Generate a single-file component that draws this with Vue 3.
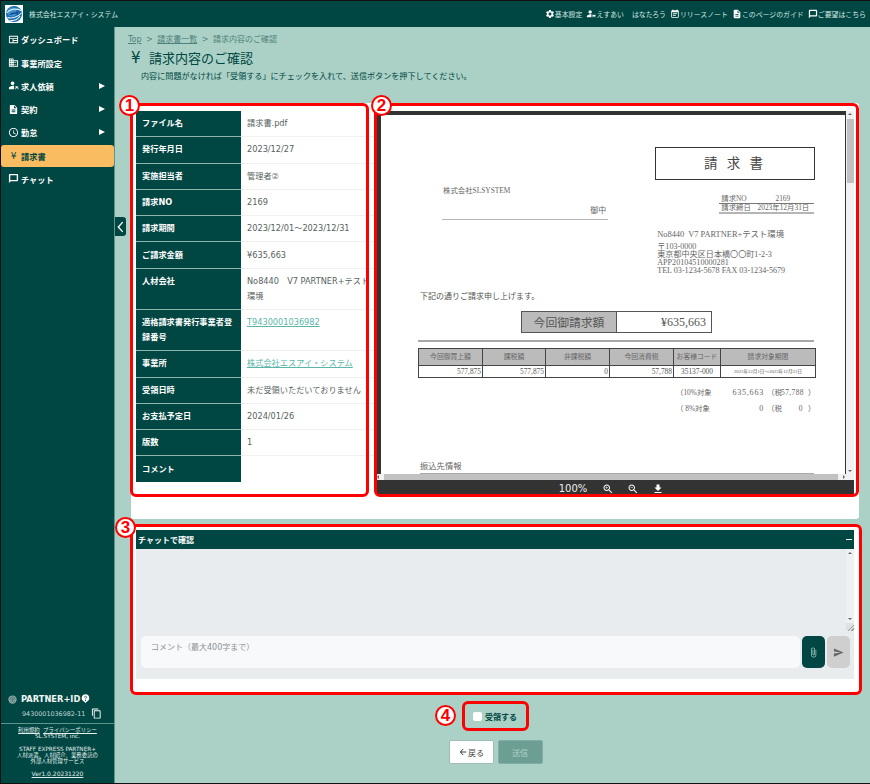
<template>
  <div class="app">
    <header class="topbar">
      <svg class="logo" viewBox="0 0 18 18">
        <rect width="18" height="18" fill="#fff" />
        <circle cx="9" cy="9" r="8" fill="#1c6bb0" />
        <circle cx="7" cy="7" r="4.500" fill="#3f94cf" />
        <path d="M1.500 8C5 4 11 3 16 5.500M2.500 12.500C7 14 13 12 16.500 8M5 15.500c4 .5 8-1.500 10-4.500" fill="none" stroke="#e6f4fb" stroke-width="1.100" />
        <path d="M5 9.500c2.500-1.500 5-2 8-1.500" fill="none" stroke="#0c3f7a" stroke-width="1.200" />
      </svg>
      <span class="company">株式会社エスアイ・システム</span>
      <nav class="top-links">
        <span v-for="link in topLinks" :key="link.label" class="top-link">
          <svg v-if="link.icon" viewBox="0 0 24 24"><path :d="icons[link.icon]" /></svg>
          {{ link.label }}
        </span>
      </nav>
    </header>

    <div class="body">
      <aside class="sidebar">
        <ul class="menu">
          <li v-for="item in menu" :key="item.label" :class="['menu-item', { active: item.active }]">
            <span v-if="item.yen" class="menu-yen">¥</span>
            <svg v-else class="menu-icon" viewBox="0 0 24 24"><path :d="icons[item.icon]" /></svg>
            <span class="menu-label">{{ item.label }}</span>
            <span v-if="item.sub" class="menu-arrow"></span>
          </li>
        </ul>

        <div class="side-foot">
          <div class="pid-title">
            <svg class="finger" viewBox="0 0 24 24">
              <circle cx="12" cy="12" r="11" fill="#8fa8a2" />
              <path d="M5 12a7 7 0 0 1 14 0M8 14a4 4 0 0 1 8 0M12 12v6M7 17c1 1.500 2 2.500 3 3M17 16c-.5 2-1 3-2 4" fill="none" stroke="#004643" stroke-width="1.300" />
            </svg>
            <span>PARTNER+ID</span>
            <svg class="help" viewBox="0 0 24 24">
              <path d="M12 1a10 10 0 0 0-4 19.200L12 24l4-3.800A10 10 0 0 0 12 1z" fill="#fff" />
              <path d="M9 9a3 3 0 1 1 4.500 2.600c-1 .6-1.500 1.200-1.500 2.400" fill="none" stroke="#004643" stroke-width="2.200" />
              <circle cx="12" cy="17" r="1.400" fill="#004643" />
            </svg>
          </div>
          <div class="pid-number">
            <span>9430001036982-11</span>
            <svg viewBox="0 0 24 24"><path :d="icons.copy" /></svg>
          </div>
          <div class="legal">
            <div><u>利用規約</u>&nbsp; <u>プライバシーポリシー</u></div>
            <div class="legal-latin">SL.SYSTEM, inc.</div>
            <div class="legal-block legal-latin">STAFF EXPRESS PARTNER+</div>
            <div>人材派遣、人材紹介、業務委託の</div>
            <div>外部人材管理サービス</div>
            <div class="legal-ver"><u>Ver1.0.20231220</u></div>
          </div>
        </div>
      </aside>

      <main class="main">
        <button class="side-toggle" type="button">
          <svg viewBox="0 0 10 18"><path d="M7.500 3.500 2.500 9l5 5.500" /></svg>
        </button>

        <div class="crumbs">
          <u>Top</u><span class="sep">&gt;</span><u>請求書一覧</u><span class="sep">&gt;</span><span>請求内容のご確認</span>
        </div>
        <h1 class="title"><span class="title-yen">¥</span>請求内容のご確認</h1>
        <p class="lead">内容に問題がなければ「受領する」にチェックを入れて、送信ボタンを押下してください。</p>

        <section class="card">
          <div class="info-box">
            <span class="mark"></span>
            <span class="badge badge-1">1</span>
            <table class="info">
              <tbody>
                <tr v-for="row in details" :key="row.label">
                  <th>{{ row.label }}</th>
                  <td>
                    <a v-if="row.link" class="link">{{ row.value }}</a>
                    <template v-else>{{ row.value }}</template>
                  </td>
                </tr>
              </tbody>
            </table>
          </div>

          <div class="viewer-box">
            <span class="mark"></span>
            <span class="badge badge-2">2</span>
            <div class="viewer">
              <div class="viewer-main">
                <div class="viewer-left">
                  <div class="doc">
                    <div class="doc-title">請 求 書</div>
                    <div class="doc-head">
                      <div class="doc-to">
                        <div>株式会社SLSYSTEM</div>
                        <div class="doc-onchu">御中</div>
                      </div>
                      <div class="doc-from">
                        <div class="doc-meta">
                          <div class="meta-row first"><span>請求NO</span><span class="meta-no">2169</span></div>
                          <div class="meta-row"><span>請求締日</span><span>2023年12月31日</span></div>
                        </div>
                        <div class="doc-name">No8440&nbsp; V7 PARTNER+テスト環境</div>
                        <div>〒103-0000</div>
                        <div>東京都中央区日本橋〇〇町1-2-3</div>
                        <div>APP20104510000281</div>
                        <div>TEL 03-1234-5678 FAX 03-1234-5679</div>
                      </div>
                    </div>
                    <div class="doc-note">下記の通りご請求申し上げます。</div>
                    <div class="doc-amount">
                      <span class="amount-label">今回御請求額</span>
                      <span class="amount-value">¥635,663</span>
                    </div>
                    <div class="doc-rule"></div>
                    <table class="doc-table">
                      <thead>
                        <tr>
                          <th v-for="col in billCols" :key="col.label" :style="{ width: col.width + 'px' }">{{ col.label }}</th>
                        </tr>
                      </thead>
                      <tbody>
                        <tr>
                          <td>577,875</td>
                          <td>577,875</td>
                          <td>0</td>
                          <td>57,788</td>
                          <td class="center">35137-000</td>
                          <td class="center tiny">2023年12月1日～2023年12月31日</td>
                        </tr>
                      </tbody>
                    </table>
                    <div class="tax-row first">
                      <span class="tax-a">（10%対象</span><span class="tax-b">635,663</span><span class="tax-c">（税</span><span class="tax-d">57,788</span><span class="tax-e">）</span>
                    </div>
                    <div class="tax-row">
                      <span class="tax-a">（ 8%対象</span><span class="tax-b">0</span><span class="tax-c">（税</span><span class="tax-d">0</span><span class="tax-e">）</span>
                    </div>
                    <div class="doc-bank">振込先情報</div>
                  </div>
                  <div class="hbar"><i class="arrow-l"></i><b></b><i class="arrow-r"></i></div>
                </div>
                <div class="vbar"><i class="arrow-u"></i><b></b><i class="arrow-d"></i></div>
              </div>
              <div class="viewer-tools">
                <span>100%</span>
                <svg viewBox="0 0 24 24"><path :d="icons.zoomIn" /></svg>
                <svg viewBox="0 0 24 24"><path :d="icons.zoomOut" /></svg>
                <svg viewBox="0 0 24 24"><path :d="icons.download" /></svg>
              </div>
            </div>
          </div>
        </section>

        <section class="chat">
          <span class="mark"></span>
          <span class="badge badge-3">3</span>
          <div class="chat-head"><span>チャットで確認</span><span class="chat-min"></span></div>
          <div class="chat-log">
            <div class="chat-scroll"><i class="arrow-u"></i><i class="arrow-d"></i><em></em></div>
          </div>
          <div class="chat-form">
            <div class="chat-input">コメント（最大400字まで）</div>
            <button class="chat-btn attach" type="button">
              <svg viewBox="0 0 24 24"><path :d="icons.attach" /></svg>
            </button>
            <button class="chat-btn send" type="button">
              <svg viewBox="0 0 24 24"><path :d="icons.send" /></svg>
            </button>
          </div>
        </section>

        <div class="receive">
          <span class="mark"></span>
          <span class="badge badge-4">4</span>
          <span class="check"></span>
          <span>受領する</span>
        </div>

        <div class="actions">
          <button class="btn back" type="button">
            <svg viewBox="0 0 24 24"><path :d="icons.back" /></svg>戻る
          </button>
          <button class="btn submit" type="button">送信</button>
        </div>
      </main>
    </div>
  </div>
</template>

<script setup>
const icons = {
  gear: 'M19.14 12.94c.04-.3.06-.61.06-.94 0-.32-.02-.64-.07-.94l2.03-1.58c.18-.14.23-.41.12-.61l-1.92-3.32c-.12-.22-.37-.29-.59-.22l-2.39.96c-.5-.38-1.03-.7-1.62-.94l-.36-2.54c-.04-.24-.24-.41-.48-.41h-3.84c-.24 0-.43.17-.47.41l-.36 2.54c-.59.24-1.13.57-1.62.94l-2.39-.96c-.22-.08-.47 0-.59.22L2.74 8.87c-.12.21-.08.47.12.61l2.03 1.58c-.05.3-.09.63-.09.94s.02.64.07.94l-2.03 1.58c-.18.14-.23.41-.12.61l1.92 3.32c.12.22.37.29.59.22l2.39-.96c.5.38 1.03.7 1.62.94l.36 2.54c.05.24.24.41.48.41h3.84c.24 0 .44-.17.47-.41l.36-2.54c.59-.24 1.13-.56 1.62-.94l2.39.96c.22.08.47 0 .59-.22l1.92-3.32c.12-.22.07-.47-.12-.61l-2.01-1.58zM12 15.6c-1.98 0-3.6-1.62-3.6-3.6s1.62-3.6 3.6-3.6 3.6 1.62 3.6 3.6-1.62 3.6-3.6 3.6z',
  doc: 'M14 2H6c-1.1 0-1.99.9-1.99 2L4 20c0 1.1.89 2 1.99 2H18c1.1 0 2-.9 2-2V8l-6-6zm2 16H8v-2h8v2zm0-4H8v-2h8v2zm-3-5V3.5L18.5 9H13z',
  comment: 'M20 2H4c-1.1 0-2 .9-2 2v18l4-4h14c1.1 0 2-.9 2-2V4c0-1.1-.9-2-2-2zm-1 13H5V5h14v10z',
  clock: 'M11.99 2C6.47 2 2 6.48 2 12s4.47 10 9.99 10C17.52 22 22 17.52 22 12S17.52 2 11.99 2zM12 20c-4.42 0-8-3.58-8-8s3.58-8 8-8 8 3.58 8 8-3.58 8-8 8zm.5-13H11v6l5.25 3.15.75-1.23-4.5-2.67z',
  send: 'M2.01 21L23 12 2.01 3 2 10l15 2-15 2z',
  attach: 'M16.5 6v11.5c0 2.21-1.79 4-4 4s-4-1.79-4-4V5c0-1.38 1.12-2.5 2.5-2.5s2.5 1.12 2.5 2.5v10.5c0 .55-.45 1-1 1s-1-.45-1-1V6H10v9.5c0 1.38 1.12 2.5 2.5 2.5s2.5-1.12 2.5-2.5V5c0-2.21-1.79-4-4-4S7 2.79 7 5v12.5c0 3.04 2.46 5.5 5.5 5.5s5.5-2.46 5.5-5.5V6h-1.5z',
  copy: 'M16 1H4c-1.1 0-2 .9-2 2v14h2V3h12V1zm3 4H8c-1.1 0-2 .9-2 2v14c0 1.1.9 2 2 2h11c1.1 0 2-.9 2-2V7c0-1.1-.9-2-2-2zm0 16H8V7h11v14z',
  zoomIn: 'M15.5 14h-.79l-.28-.27C15.41 12.59 16 11.11 16 9.5 16 5.91 13.09 3 9.5 3S3 5.91 3 9.5 5.91 16 9.5 16c1.61 0 3.09-.59 4.23-1.57l.27.28v.79l5 4.99L20.49 19l-4.99-5zm-6 0C7.01 14 5 11.99 5 9.5S7.01 5 9.5 5 14 7.01 14 9.5 11.99 14 9.5 14zm2.5-4h-2v2H9v-2H7V9h2V7h1v2h2v1z',
  zoomOut: 'M15.5 14h-.79l-.28-.27C15.41 12.59 16 11.11 16 9.5 16 5.91 13.09 3 9.5 3S3 5.91 3 9.5 5.91 16 9.5 16c1.61 0 3.09-.59 4.23-1.57l.27.28v.79l5 4.99L20.49 19l-4.99-5zm-6 0C7.01 14 5 11.99 5 9.5S7.01 5 9.5 5 14 7.01 14 9.5 11.99 14 9.5 14zM7 9h5v1H7z',
  download: 'M19 9h-4V3H9v6H5l7 7 7-7zM5 18v2h14v-2H5z',
  back: 'M20 11H7.83l5.59-5.59L12 4l-8 8 8 8 1.41-1.41L7.83 13H20v-2z',
  person: 'M10 11c2.21 0 4-1.79 4-4s-1.790-4-4-4-4 1.790-4 4 1.790 4 4 4zm0 2c-2.670 0-8 1.340-8 4v3h11v-7.700c-1-.200-2.100-.300-3-.300zm9 .500a2.500 2.500 0 1 0 0 5 2.500 2.500 0 0 0 0-5zM15 14h2v2h-2zm6 0h2v2h-2zm-6 4h2v2h-2zm6 0h2v2h-2z',
  building: 'M12 7V3H2v18h20V7H12zM6 19H4v-2h2v2zm0-4H4v-2h2v2zm0-4H4V9h2v2zm0-4H4V5h2v2zm4 12H8v-2h2v2zm0-4H8v-2h2v2zm0-4H8V9h2v2zm0-4H8V5h2v2zm10 12h-8v-2h2v-2h-2v-2h2v-2h-2V9h8v10zm-2-8h-2v2h2v-2zm0 4h-2v2h2v-2z',
  event: 'M17 10H7v2h10v-2zm2-7h-1V1h-2v2H8V1H6v2H5c-1.11 0-1.99.9-1.99 2L3 19c0 1.1.89 2 2 2h14c1.1 0 2-.9 2-2V5c0-1.1-.9-2-2-2zm0 16H5V8h14v11zm-5-5H7v2h7v-2z',
  board: 'M3 4h18a1 1 0 0 1 1 1v14a1 1 0 0 1-1 1H3a1 1 0 0 1-1-1V5a1 1 0 0 1 1-1zm1 2v3h16V6H4zm0 5v7h6v-7H4zm8 0v2h8v-2h-8zm0 4v3h8v-3h-8z'
}

const topLinks = [
  { label: '基本設定', icon: 'gear' },
  { label: 'えすあい', icon: 'person' },
  { label: 'はなたろう' },
  { label: 'リリースノート', icon: 'event' },
  { label: 'このページのガイド', icon: 'doc' },
  { label: 'ご要望はこちら', icon: 'comment' }
]

const menu = [
  { label: 'ダッシュボード', icon: 'board' },
  { label: '事業所設定', icon: 'building' },
  { label: '求人依頼', icon: 'person', sub: true },
  { label: '契約', icon: 'doc', sub: true },
  { label: '勤怠', icon: 'clock', sub: true },
  { label: '請求書', yen: true, active: true },
  { label: 'チャット', icon: 'comment' }
]

const details = [
  { label: 'ファイル名', value: '請求書.pdf' },
  { label: '発行年月日', value: '2023/12/27' },
  { label: '実施担当者', value: '管理者②' },
  { label: '請求NO', value: '2169' },
  { label: '請求期間', value: '2023/12/01～2023/12/31' },
  { label: 'ご請求金額', value: '¥635,663' },
  { label: '人材会社', value: 'No8440　V7 PARTNER+テスト環境' },
  { label: '適格請求書発行事業者登録番号', value: 'T9430001036982', link: true },
  { label: '事業所', value: '株式会社エスアイ・システム', link: true },
  { label: '受領日時', value: '未だ受領いただいておりません' },
  { label: 'お支払予定日', value: '2024/01/26' },
  { label: '版数', value: '1' },
  { label: 'コメント', value: '' }
]

const billCols = [
  { label: '今回御買上額', width: 64 },
  { label: '課税額', width: 63 },
  { label: '非課税額', width: 64 },
  { label: '今回消費税', width: 64 },
  { label: 'お客様コード', width: 47 },
  { label: '請求対象期間', width: 95 }
]
</script>

<style scoped>
.app {
  width: 870px;
  height: 784px;
  box-sizing: border-box;
  border-top: 1px solid #111;
  border-left: 1px solid #111;
  border-bottom: 1px solid #111;
  display: flex;
  flex-direction: column;
  overflow: hidden;
  background: #abd1c6;
  color: #004643;
  font-family: "DejaVu Sans", "Noto Sans CJK JP", sans-serif;
}

.topbar {
  height: 26px;
  flex: none;
  display: flex;
  align-items: center;
  background: #004643;
  color: #d5e6e1;
  padding: 0 4px 0 4px;
}

.logo {
  width: 18px;
  height: 18px;
  margin-right: 6px;
}

.company {
  font-size: 6.900px;
}

.top-links {
  margin-left: auto;
  display: flex;
  gap: 4px;
  font-size: 6.900px;
}

.top-link {
  display: flex;
  align-items: center;
}

.top-link:nth-child(3) {
  margin-left: 4px;
}

.top-link svg {
  width: 10px;
  height: 10px;
  fill: #fff;
}

.body {
  flex: 1;
  display: flex;
  min-height: 0;
}

.sidebar {
  width: 113px;
  flex: none;
  background: #004643;
  color: #fff;
  display: flex;
  flex-direction: column;
  border-right: 1px solid #5f958a;
  box-sizing: content-box;
}

.menu {
  list-style: none;
  margin: 0;
  padding: 1.500px 0 0;
}

.menu-item {
  height: 21.600px;
  margin-bottom: 1.700px;
  display: flex;
  align-items: center;
  padding: 0 9px 0 7px;
  font-size: 8.200px;
  font-weight: 700;
  border-radius: 3px;
}

.menu-item.active {
  background: #f9bc60;
  color: #004643;
}

.menu-icon {
  width: 11px;
  height: 11px;
  fill: #fff;
  margin-right: 2px;
  flex: none;
}

.menu-yen {
  width: 11px;
  margin-right: 2px;
  text-align: center;
  font-size: 9px;
  font-weight: 400;
}

.menu-arrow {
  margin-left: auto;
  border-left: 6px solid #fff;
  border-top: 3.500px solid transparent;
  border-bottom: 3.500px solid transparent;
}

.side-foot {
  margin-top: auto;
}

.pid-title {
  display: flex;
  align-items: center;
  padding-left: 7px;
  font-size: 8.300px;
  font-weight: 700;
  color: #f2f7f5;
  position: relative;
  top: 1px;
}

.finger {
  width: 9px;
  height: 9px;
  margin-right: 4px;
}

.help {
  width: 9px;
  height: 9px;
  margin: -2px 0 0 1px;
}

.pid-number {
  display: flex;
  align-items: center;
  padding: 5px 0 4px 21px;
  font-size: 6.400px;
  color: #c4d8d3;
}

.pid-number svg {
  width: 11px;
  height: 11px;
  fill: #fff;
  margin-left: 6px;
}

.legal {
  border-top: 1px solid #5f958a;
  padding: 3px 0 6px;
  text-align: center;
  font-size: 5.400px;
  line-height: 6px;
  color: #e4efec;
}

.legal-latin {
  font-size: 5.700px;
}

.legal-block {
  margin-top: 7px;
}

.legal-ver {
  margin-top: 7px;
  font-size: 6px;
}

.main {
  flex: 1;
  position: relative;
  min-width: 0;
  padding: 0 10px 0 16px;
}

.side-toggle {
  position: absolute;
  left: 0;
  top: 190px;
  width: 11px;
  height: 19px;
  padding: 0;
  border: 0;
  border-radius: 0 3px 3px 0;
  background: #004643;
  display: flex;
  align-items: center;
  justify-content: center;
}

.side-toggle svg {
  width: 9px;
  height: 16px;
  fill: none;
  stroke: #fff;
  stroke-width: 1.500;
}

.crumbs {
  padding-top: 7px;
  margin-left: -3px;
  font-size: 8px;
  line-height: 11px;
  color: #4f7f7a;
}

.sep {
  margin: 0 4.500px;
}

.title {
  margin: 4px 0 0;
  font-size: 13px;
  line-height: 19px;
  font-weight: 400;
  color: #004643;
}

.title-yen {
  display: inline-block;
  width: 18px;
  font-size: 15px;
}

.lead {
  margin: 3px 0 0 10px;
  font-size: 8.100px;
  line-height: 11px;
}

.card {
  margin-top: 21px;
  width: 728px;
  height: 416px;
  display: flex;
  background: #fff;
  border-radius: 3px;
}

.mark {
  position: absolute;
  inset: 0;
  z-index: 2;
  border: 3px solid #f00;
  border-radius: 6px;
  pointer-events: none;
}

.badge {
  position: absolute;
  z-index: 3;
  width: 21px;
  height: 21px;
  box-sizing: border-box;
  border: 2px solid #f00;
  border-radius: 50%;
  background: #fff;
  color: #f00;
  font: 700 17px/17px "Liberation Sans", sans-serif;
  text-align: center;
}

.info-box {
  position: relative;
  width: 244px;
  height: 394px;
  margin-left: -1px;
  flex: none;
  box-sizing: border-box;
  padding: 8px 0 0 6px;
}

.info-box .mark {
  right: 5px;
}

.badge-1 {
  left: -11px;
  top: -8px;
}

.info {
  width: 239px;
  table-layout: fixed;
  border-collapse: collapse;
  font-size: 8.200px;
  line-height: 15px;
}

.info th {
  width: 105px;
  padding: 5.150px 6px;
  background: #004643;
  color: #fff;
  font-weight: 700;
  text-align: left;
  vertical-align: top;
  border-bottom: 1px solid #8fb5ac;
  box-sizing: border-box;
}

.info td {
  padding: 5.150px 5px 5.150px 6px;
  color: #565f5e;
  vertical-align: top;
  border-bottom: 1px solid #f0f1f1;
}

.info tr:last-child th,
.info tr:last-child td {
  border-bottom: 0;
}

.link {
  color: #5bb5a8;
  text-decoration: underline;
}

.viewer-box {
  position: relative;
  flex: 1;
  height: 394px;
  box-sizing: border-box;
  padding: 8px 5px 3px 3px;
  min-width: 0;
}

.badge-2 {
  left: -3px;
  top: -8px;
}

.viewer {
  height: 383px;
  background: #333;
  display: flex;
  flex-direction: column;
}

.viewer-main {
  height: 369px;
  flex: none;
  display: flex;
}

.viewer-left {
  flex: 1;
  min-width: 0;
  padding: 4px 0 0 4px;
  box-sizing: border-box;
}

.doc {
  height: 359px;
  margin-right: 1.500px;
  overflow: hidden;
  background: #fff;
  padding: 32px 30px 0 37px;
  box-sizing: border-box;
  font-family: "Liberation Serif", "Noto Sans CJK JP", serif;
  font-size: 7.400px;
  line-height: 8px;
  color: #666;
}

.doc-title {
  margin-left: 237px;
  width: 160px;
  height: 33px;
  box-sizing: border-box;
  border: 1px solid #333;
  border-right-width: 1.500px;
  border-bottom-width: 1.500px;
  text-align: center;
  font-size: 13.500px;
  line-height: 31px;
  letter-spacing: 3px;
  color: #444;
}

.doc-head {
  display: flex;
  margin-top: 6px;
  height: 94px;
}

.doc-to {
  margin-left: 24px;
  width: 167px;
  height: 34px;
  box-sizing: border-box;
  padding: 1px 0 0 1px;
  border-bottom: 1.500px solid #b5b5b5;
}

.doc-onchu {
  margin-top: 12px;
  text-align: right;
  padding-right: 2px;
  font-size: 8px;
}

.doc-from {
  margin-left: 49px;
  width: 158px;
  padding-top: 9px;
  font-size: 8.100px;
  white-space: nowrap;
}

.doc-meta {
  margin-left: 62px;
  width: 95px;
  margin-bottom: 16px;
  font-size: 7.400px;
  border-bottom: 2px solid #b5b5b5;
}

.meta-row {
  display: flex;
  justify-content: space-between;
  padding: 0 5px 0 2px;
}

.meta-row.first {
  border-bottom: 1px solid #777;
  padding-right: 24px;
}

.doc-name {
  font-size: 8.400px;
  line-height: 10px;
  margin-bottom: 3px;
}

.doc-note {
  margin: 11px 0 0 2px;
  line-height: 11px;
  font-size: 8px;
  color: #555;
}

.doc-amount {
  display: flex;
  margin: 9px 0 0 103px;
  width: 191px;
  height: 22px;
  box-sizing: border-box;
  border: 1px solid #555;
}

.amount-label {
  width: 94px;
  background: #bbb;
  border-right: 1px solid #555;
  text-align: center;
  font: 11.800px/20px "Noto Sans CJK JP", sans-serif;
  color: #555;
}

.amount-value {
  flex: 1;
  text-align: right;
  padding-right: 5px;
  font-size: 12px;
  line-height: 20px;
  color: #555;
}

.doc-rule {
  width: 396px;
  height: 2px;
  margin-top: 7px;
  background: #a8a8a8;
}

.doc-table {
  margin-top: 6px;
  width: 397px;
  table-layout: fixed;
  border-collapse: collapse;
  font-size: 7.400px;
}

.doc-table th {
  height: 17px;
  padding: 0;
  box-sizing: border-box;
  background: #bbb;
  border: 1px solid #444;
  font-weight: 400;
  font-size: 6.800px;
  color: #666;
}

.doc-table td {
  height: 12px;
  padding: 0 1px;
  box-sizing: border-box;
  border: 1px solid #444;
  text-align: right;
  color: #555;
}

.doc-table td.center {
  text-align: center;
}

.doc-table td.tiny {
  padding: 0;
  font-size: 4.700px;
  white-space: nowrap;
}

.tax-row {
  display: flex;
  margin-left: 258px;
  height: 16px;
  line-height: 16px;
  white-space: nowrap;
  font-size: 7.400px;
}

.tax-row span {
  flex: none;
}

.tax-row.first {
  margin-top: 7px;
}

.tax-a {
  width: 34px;
}

.tax-b {
  width: 54px;
  text-align: right;
  font-size: 8px;
  letter-spacing: .8px;
}

.tax-c {
  width: 14px;
  margin-left: 3px;
}

.tax-d {
  width: 22px;
  text-align: right;
  font-size: 7.500px;
  letter-spacing: .4px;
}

.tax-e {
  width: 8px;
  margin-left: 5px;
}

.doc-bank {
  margin-top: 43.500px;
  margin-left: 2px;
  font-size: 8.300px;
  line-height: 11px;
  height: 12px;
  width: 394px;
  border-bottom: 2px solid #aaa;
}

.hbar {
  height: 6px;
  margin-left: -4px;
  background: #f1f1f1;
  display: flex;
  align-items: center;
  justify-content: space-between;
  padding-right: 1px;
}

.hbar b {
  flex: 1;
  height: 6px;
  margin: 0 5px;
  background: #c1c1c1;
}

.vbar {
  width: 8px;
  background: #f1f1f1;
  display: flex;
  flex-direction: column;
  align-items: center;
  padding: 2px 0 8px;
  box-sizing: border-box;
}

.vbar b {
  width: 7px;
  height: 64px;
  margin-top: 4px;
  background: #c1c1c1;
}

.vbar .arrow-d {
  margin-top: auto;
}

.arrow-u {
  border: 2px solid transparent;
  border-top: 0;
  border-bottom: 2.500px solid #666;
}

.arrow-d {
  border: 2px solid transparent;
  border-bottom: 0;
  border-top: 2.500px solid #666;
}

.arrow-l {
  border: 2px solid transparent;
  border-left: 0;
  border-right: 2.500px solid #666;
}

.arrow-r {
  border: 2px solid transparent;
  border-right: 0;
  border-left: 2.500px solid #666;
}

.viewer-tools {
  flex: 1;
  margin-top: 1px;
  padding: 1px 8px 0 0;
  display: flex;
  align-items: flex-start;
  justify-content: center;
  gap: 13px;
  color: #fff;
  font-size: 10px;
  line-height: 13px;
}

.viewer-tools span {
  margin-right: 2px;
  color: #eee;
}

.viewer-tools svg {
  width: 12px;
  height: 12px;
  fill: #fff;
  margin-top: 1px;
}

.chat {
  position: relative;
  margin-top: 6px;
  width: 728px;
  height: 168px;
  box-sizing: border-box;
  padding: 5px 5px 0;
  background: #fff;
  border-radius: 3px;
}

.chat .mark {
  inset: -1px -3px -2px -1px;
}

.badge-3 {
  left: -16px;
  top: -8px;
}

.chat-head {
  height: 19px;
  display: flex;
  align-items: center;
  justify-content: space-between;
  padding: 0 2px;
  background: #004643;
  color: #fff;
  font-size: 8px;
  font-weight: 700;
}

.chat-min {
  width: 6px;
  height: 1.500px;
  background: #fff;
}

.chat-log {
  height: 82px;
  display: flex;
  justify-content: flex-end;
  background: #e8ecef;
}

.chat-scroll {
  width: 8px;
  display: flex;
  flex-direction: column;
  align-items: center;
  padding-top: 3px;
  background: #eef0f2;
  box-sizing: border-box;
}

.chat-scroll .arrow-d {
  margin-top: auto;
  margin-bottom: 3px;
}

.chat-scroll em {
  width: 8px;
  height: 8px;
  background: linear-gradient(135deg, #dfe2e4 60%, #999 60%, #999 68%, #dfe2e4 68%, #dfe2e4 80%, #999 80%, #999 88%, #dfe2e4 88%);
}

.chat-form {
  height: 48px;
  box-sizing: border-box;
  display: flex;
  gap: 2px;
  padding: 5px 4px 11px 5px;
  background: #e8ecef;
}

.chat-input {
  flex: 1;
  padding: 0 10px;
  border-radius: 5px;
  background: #f7f9fb;
  color: #8a9194;
  font-size: 8px;
  line-height: 24px;
}

.chat-btn {
  width: 23px;
  padding: 0;
  border: 0;
  border-radius: 5px;
  display: flex;
  align-items: center;
  justify-content: center;
}

.chat-btn svg {
  width: 11px;
  height: 11px;
}

.attach {
  background: #004643;
}

.attach svg {
  fill: #abd1c6;
}

.send {
  background: #cfcfcf;
}

.send svg {
  fill: #666;
}

.receive {
  position: relative;
  margin: 8px auto 0;
  width: 67px;
  height: 30px;
  box-sizing: border-box;
  display: flex;
  align-items: center;
  padding-left: 11px;
  gap: 3px;
  font-size: 8px;
  font-weight: 700;
  color: #004643;
}

.check {
  width: 9px;
  height: 9px;
  background: #fff;
  border-radius: 2px;
}

.badge-4 {
  left: -27px;
  top: 4px;
}

.actions {
  display: flex;
  justify-content: center;
  gap: 4px;
  margin-top: 9px;
}

.btn {
  width: 45px;
  height: 24px;
  padding: 0;
  border-radius: 2px;
  font-family: inherit;
  font-size: 8px;
  display: flex;
  align-items: center;
  justify-content: center;
}

.back {
  background: #fff;
  border: 1px solid #9dbdb5;
  color: #444;
}

.back svg {
  width: 10px;
  height: 10px;
  fill: #444;
}

.submit {
  background: #6d9e94;
  border: 1px solid #82ada3;
  color: #abd1c6;
}
</style>

<style>
html,
body {
  margin: 0;
  background: #abd1c6;
  overflow: hidden;
}
</style>
